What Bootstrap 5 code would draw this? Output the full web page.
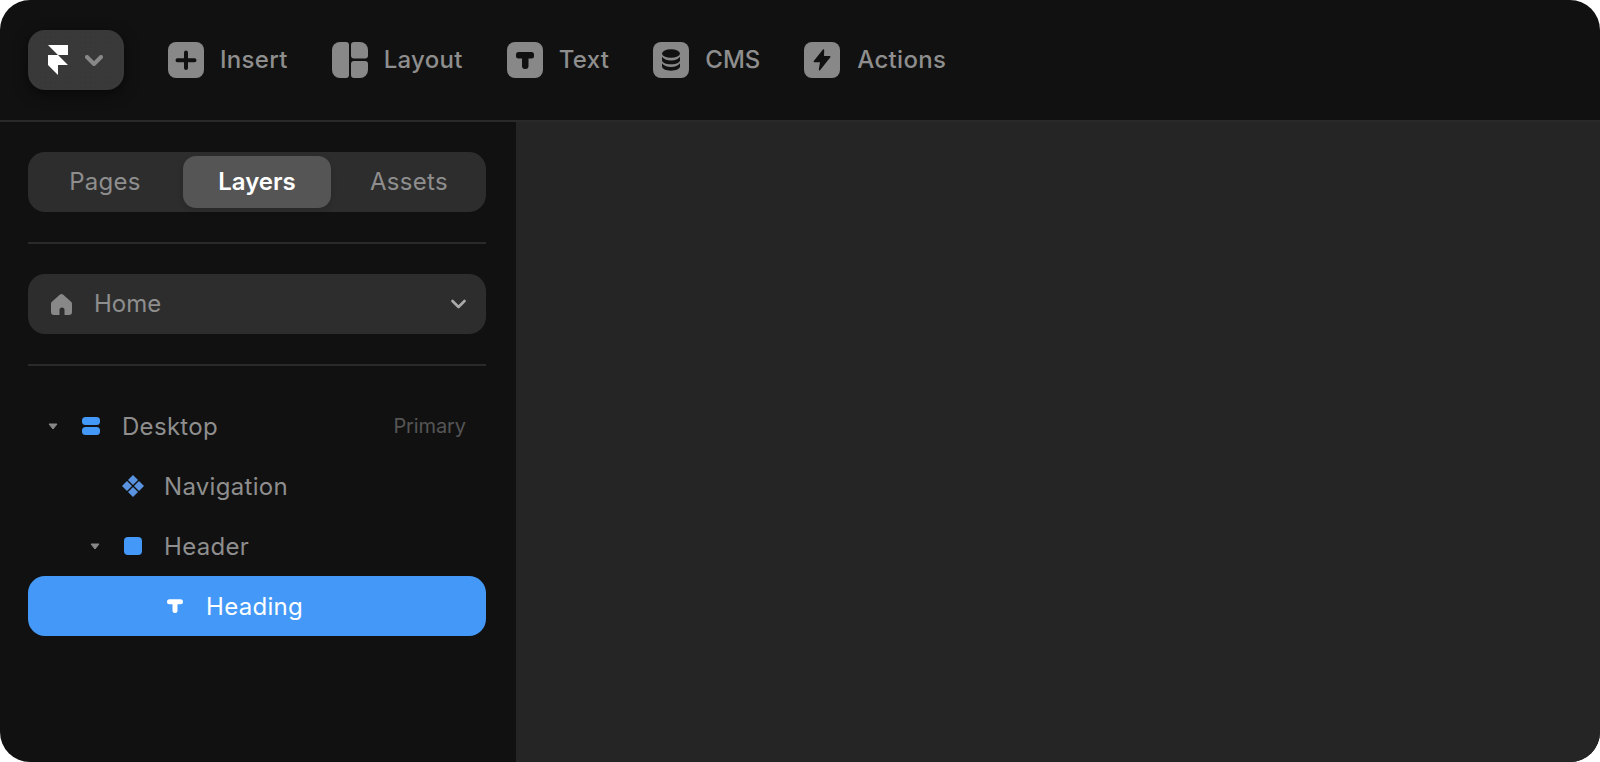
<!DOCTYPE html>
<html lang="en">
<head>
<meta charset="utf-8">
<title>Framer editor</title>
<link href="https://cdn.jsdelivr.net/npm/bootstrap@5.3.0/dist/css/bootstrap.min.css" rel="stylesheet">
<style>
html,body{height:100%;margin:0;background:#fff;overflow:hidden}
body{font-family:Inter,"Liberation Sans",sans-serif;font-size:24px;line-height:1.2}
.app-frame{width:1600px;height:762px;background:#111;border-radius:30px;overflow:hidden}
.top-bar{height:122px;border-bottom:2px solid #2a2a2a;padding-left:28px;flex:none}
.logo-btn{width:96px;height:60px;border-radius:17px;margin-right:44px;background-color:#393939;background-image:radial-gradient(#353535 .6px,transparent .7px);background-size:5px 5px;box-shadow:0 4px 14px rgba(0,0,0,.55);padding:0 21px 0 20px}
.tool-item{color:#8e8e8e;font-weight:500;gap:16px;margin-right:44px;letter-spacing:.3px}
.tool-cms{letter-spacing:0;margin-right:44px}
.tool-icon{width:36px;height:36px;flex:none;display:block}
.tool-last{gap:17px}
.side-pane{width:516px;padding:30px 30px 0 28px;flex:none}
.canvas-pane{background:#252525}
.tab-set{background:#2d2d2d;border-radius:17px;height:60px;padding:4px 3px;gap:4px}
.tab-item{width:148px;border-radius:13px;color:#8e8e8e;letter-spacing:.3px;font-weight:400}
.tab-item.is-on{background:#555;color:#fff;font-weight:600;letter-spacing:0;box-shadow:0 2px 6px rgba(0,0,0,.12)}
.pane-rule{height:2px;background:#2a2a2a;margin:30px 0}
.page-select{background:#2d2d2d;border-radius:17px;height:60px;color:#8e8e8e;padding:0 20px 0 23px}
.page-select .home-name{margin-left:22px}
.layer-row{height:60px;color:#8e8e8e;border-radius:17px}
.layer-row.is-on{background:#4499f8;color:#fff}
.row-label{padding-top:2px;letter-spacing:.3px}
.caret{width:10px;height:7px;flex:none;display:block}
.glyph{width:18px;height:18px;flex:none;display:block}
.row-lv0{padding-left:20px}
.lv0-caret{margin-right:24px}
.lv0-glyph{margin-right:22px}
.row-nav{padding-left:94px}
.row-nav .glyph{width:22px;height:22px;margin-right:20px}
.row-head{padding-left:62px}
.lv1-caret{margin-right:24px}
.lv1-glyph{margin-right:22px}
.row-text{padding-left:139px}
.row-text .glyph{width:16px;height:14px;margin-right:23px}
.tag-primary{color:#555;font-size:20px;margin-left:auto;margin-right:20px;letter-spacing:-.1px}
</style>
</head>
<body>
<div class="app-frame d-flex flex-column">
  <header class="top-bar d-flex align-items-center">
    <button type="button" class="logo-btn btn border-0 d-flex align-items-center justify-content-between" aria-label="Menu">
      <svg width="20" height="30" viewBox="0 0 20 30"><path fill="#fff" d="M0 0H20V10H10ZM0 10H10L20 20H10V30L0 20Z"/></svg>
      <svg width="18" height="11" viewBox="0 0 18 11"><path d="M2 2l7 7 7-7" fill="none" stroke="#888" stroke-width="4" stroke-linecap="round" stroke-linejoin="round"/></svg>
    </button>
    <nav class="d-flex align-items-center">
      <div class="tool-item d-flex align-items-center">
        <svg class="tool-icon" viewBox="0 0 36 36"><rect width="36" height="36" rx="8" fill="#888"/><path d="M18 10.500V26M9.500 18.200H26.500" stroke="#111" stroke-width="4" stroke-linecap="round"/></svg>
        <span>Insert</span>
      </div>
      <div class="tool-item d-flex align-items-center">
        <svg class="tool-icon" viewBox="0 0 36 36"><g fill="#888"><path d="M8 0h6a3 3 0 0 1 3 3v30a3 3 0 0 1-3 3H8a8 8 0 0 1-8-8V8a8 8 0 0 1 8-8Z"/><path d="M22 0h6a8 8 0 0 1 8 8v5.500a3 3 0 0 1-3 3H22a3 3 0 0 1-3-3V3a3 3 0 0 1 3-3Z"/><path d="M22 19h11a3 3 0 0 1 3 3v6a8 8 0 0 1-8 8h-6a3 3 0 0 1-3-3V22a3 3 0 0 1 3-3Z"/></g></svg>
        <span>Layout</span>
      </div>
      <div class="tool-item d-flex align-items-center">
        <svg class="tool-icon" viewBox="0 0 36 36"><rect width="36" height="36" rx="8" fill="#888"/><g fill="#111"><rect x="9" y="10" width="18" height="6.500" rx="2.500"/><rect x="15" y="10" width="6.500" height="17" rx="3"/></g></svg>
        <span>Text</span>
      </div>
      <div class="tool-item tool-cms d-flex align-items-center">
        <svg class="tool-icon" viewBox="0 0 36 36"><rect width="36" height="36" rx="8" fill="#888"/><g fill="#111"><ellipse cx="18" cy="11.500" rx="9" ry="4.300"/><path d="M9 14.800c1.500 2.300 4.800 3.700 9 3.700s7.500-1.400 9-3.700v3.400c0 2.300-4 4.100-9 4.100s-9-1.800-9-4.100Z"/><path d="M9 21.300c1.500 2.300 4.800 3.700 9 3.700s7.500-1.400 9-3.700v3.300c0 2.300-4 4.100-9 4.100s-9-1.800-9-4.100Z"/></g></svg>
        <span>CMS</span>
      </div>
      <div class="tool-item tool-last d-flex align-items-center">
        <svg class="tool-icon" viewBox="0 0 36 36"><rect width="36" height="36" rx="8" fill="#888"/><path d="M19.500 8L10.300 19.500H16.800L15.500 27.700L25.800 14.700H19.300Z" fill="#111" stroke="#111" stroke-width="1.400" stroke-linejoin="round"/></svg>
        <span>Actions</span>
      </div>
    </nav>
  </header>
  <div class="d-flex flex-grow-1">
    <aside class="side-pane">
      <div class="tab-set d-flex">
        <div class="tab-item d-flex align-items-center justify-content-center">Pages</div>
        <div class="tab-item is-on d-flex align-items-center justify-content-center">Layers</div>
        <div class="tab-item d-flex align-items-center justify-content-center">Assets</div>
      </div>
      <div class="pane-rule"></div>
      <div class="page-select d-flex align-items-center">
        <svg width="21" height="21" viewBox="0 0 21 21"><path fill="#888" d="M8.700.8a2.800 2.800 0 0 1 3.600 0l7.200 6.400a3 3 0 0 1 1.500 2.400V18a3 3 0 0 1-3 3h-3.800a.6.600 0 0 1-.7-.6V16a2.500 2.500 0 0 0-5 0v4.400a.6.600 0 0 1-.7.6H3a3 3 0 0 1-3-3V9.600a3 3 0 0 1 1.500-2.400Z"/></svg>
        <span class="home-name">Home</span>
        <svg class="ms-auto" width="15" height="10" viewBox="0 0 15 10"><path d="M1.500 2l6 6 6-6" fill="none" stroke="#aaa" stroke-width="2.600" stroke-linecap="round" stroke-linejoin="round"/></svg>
      </div>
      <div class="pane-rule"></div>
      <div class="layer-row row-lv0 d-flex align-items-center">
        <svg class="caret lv0-caret" viewBox="0 0 10 7"><path fill="#888" stroke="#888" stroke-linejoin="round" d="M1 1H9L5 6Z"/></svg>
        <svg class="glyph lv0-glyph" viewBox="0 0 18 18"><rect width="18" height="8" rx="3.500" fill="#4499f8"/><rect y="10" width="18" height="8" rx="3.500" fill="#4499f8"/></svg>
        <span class="row-label">Desktop</span>
        <span class="tag-primary">Primary</span>
      </div>
      <div class="layer-row row-nav d-flex align-items-center">
        <svg class="glyph" viewBox="0 0 22 22"><g fill="#5a94e0"><path d="M11 0l5 5-5 5-5-5Z"/><path d="M11 12l5 5-5 5-5-5Z"/><path d="M5 6l5 5-5 5-5-5Z"/><path d="M17 6l5 5-5 5-5-5Z"/></g></svg>
        <span class="row-label">Navigation</span>
      </div>
      <div class="layer-row row-head d-flex align-items-center">
        <svg class="caret lv1-caret" viewBox="0 0 10 7"><path fill="#888" stroke="#888" stroke-linejoin="round" d="M1 1H9L5 6Z"/></svg>
        <svg class="glyph lv1-glyph" viewBox="0 0 18 18"><rect width="18" height="18" rx="4" fill="#4499f8"/></svg>
        <span class="row-label">Header</span>
      </div>
      <div class="layer-row is-on row-text d-flex align-items-center">
        <svg class="glyph" viewBox="0 0 16 14"><path d="M2.500 2.800H13.500M8 2.800V11.500" stroke="#fff" stroke-width="5" stroke-linecap="round" fill="none"/></svg>
        <span class="row-label">Heading</span>
      </div>
    </aside>
    <main class="canvas-pane flex-grow-1"></main>
  </div>
</div>
<script src="https://cdn.jsdelivr.net/npm/bootstrap@5.3.0/dist/js/bootstrap.bundle.min.js"></script>
</body>
</html>
